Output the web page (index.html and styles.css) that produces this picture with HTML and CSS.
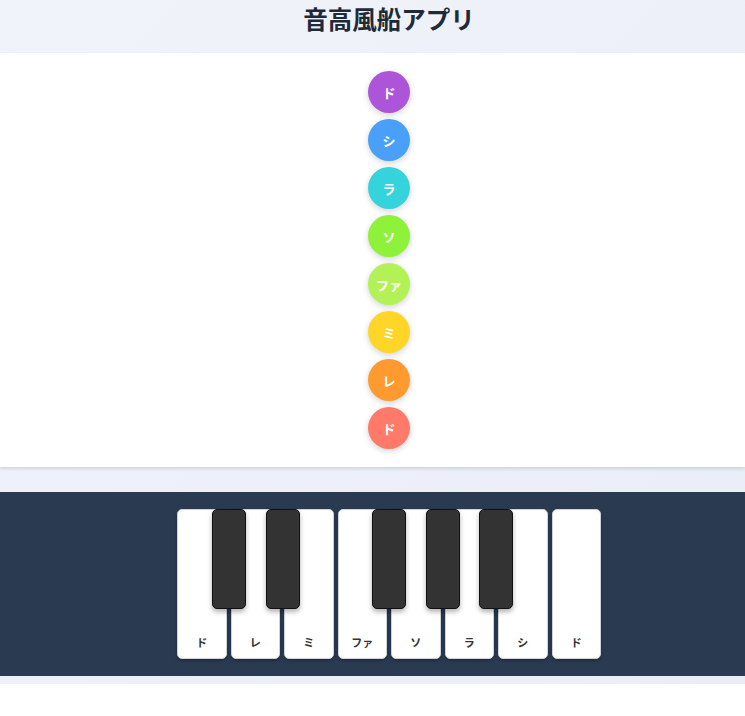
FILE: index.html
```html
<!DOCTYPE html>
<html lang="ja">
<head>
<meta charset="utf-8">
<title>音高風船アプリ</title>
<link rel="stylesheet" href="styles.css">
</head>
<body>
<div class="app">
  <header class="header">
    <h1 class="title">音高風船アプリ</h1>
  </header>
  <section class="balloons">
    <div class="balloon b-do2">ド</div>
    <div class="balloon b-si">シ</div>
    <div class="balloon b-la">ラ</div>
    <div class="balloon b-so">ソ</div>
    <div class="balloon b-fa">ファ</div>
    <div class="balloon b-mi">ミ</div>
    <div class="balloon b-re">レ</div>
    <div class="balloon b-do">ド</div>
  </section>
  <section class="piano-area">
    <div class="piano">
      <div class="white-key"><span class="label">ド</span></div>
      <div class="white-key"><span class="label">レ</span></div>
      <div class="white-key"><span class="label">ミ</span></div>
      <div class="white-key"><span class="label">ファ</span></div>
      <div class="white-key"><span class="label">ソ</span></div>
      <div class="white-key"><span class="label">ラ</span></div>
      <div class="white-key"><span class="label">シ</span></div>
      <div class="white-key"><span class="label">ド</span></div>
      <div class="black-key k1"></div>
      <div class="black-key k2"></div>
      <div class="black-key k3"></div>
      <div class="black-key k4"></div>
      <div class="black-key k5"></div>
    </div>
  </section>
</div>
</body>
</html>
```

FILE: styles.css
```css
html, body {
  margin: 0;
  padding: 0;
  background: #ffffff;
}
body {
  font-family: "Noto Sans CJK JP", "Noto Sans", sans-serif;
}
.app {
  background: linear-gradient(135deg, #f1f3fa 0%, #e9edf6 100%);
  padding-bottom: 8px;
}
.header {
  height: 53px;
  display: flex;
  justify-content: center;
  align-items: flex-start;
  padding-left: 33px;
  box-sizing: border-box;
}
.title {
  margin: 0;
  font-size: 24.5px;
  font-weight: 700;
  line-height: 37px;
  color: #1f2a38;
}
.balloons {
  background: #ffffff;
  height: 414px;
  box-sizing: border-box;
  padding: 18px 0 18px 33px;
  display: flex;
  flex-direction: column;
  align-items: center;
  gap: 6px;
  box-shadow: 0 2px 3px rgba(0, 0, 0, 0.12);
}
.balloon {
  width: 42px;
  height: 42px;
  border-radius: 50%;
  display: flex;
  align-items: center;
  justify-content: center;
  color: #ffffff;
  font-size: 13px;
  font-weight: 700;
  box-shadow: 0 2px 6px rgba(0, 0, 0, 0.18);
}
.b-do2 { background: #ad55d9; }
.b-si { background: #4a9ff8; }
.b-la { background: #35d3dc; }
.b-so { background: #8ef23a; }
.b-fa { background: #b3f257; }
.b-mi { background: #ffd628; }
.b-re { background: #ff9a30; }
.b-do { background: #ff7a68; }

.piano-area {
  margin-top: 25px;
  background: #2a3b51;
  padding: 17px 0 17px 33px;
  display: flex;
  justify-content: center;
}
.piano {
  position: relative;
  display: flex;
  gap: 4px;
  width: 424px;
}
.white-key {
  width: 49.5px;
  height: 150px;
  box-sizing: border-box;
  background: #ffffff;
  border: 1px solid #cfd3d8;
  border-radius: 5px;
  box-shadow: 0 2px 3px rgba(0, 0, 0, 0.25);
  display: flex;
  align-items: flex-end;
  justify-content: center;
  padding-bottom: 9px;
}
.label {
  font-size: 11px;
  font-weight: 700;
  color: #333333;
  line-height: 14px;
}
.black-key {
  position: absolute;
  top: 0;
  width: 34px;
  height: 100px;
  box-sizing: border-box;
  background: #333333;
  border: 1px solid #111111;
  border-radius: 5px;
  box-shadow: 0 3px 5px rgba(0, 0, 0, 0.3);
}
.k1 { left: 35px; }
.k2 { left: 89px; }
.k3 { left: 195px; }
.k4 { left: 249px; }
.k5 { left: 302px; }
```
